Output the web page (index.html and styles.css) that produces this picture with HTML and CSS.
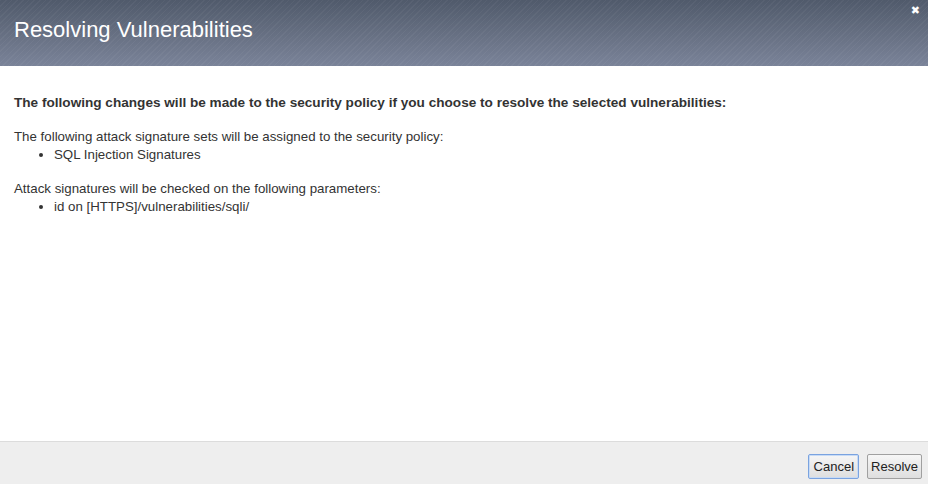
FILE: index.html
```html
<!DOCTYPE html>
<html>
<head>
<meta charset="utf-8">
<link rel="stylesheet" href="styles.css">
</head>
<body>
<div class="dialog">
  <div class="header">
    <h1 class="title">Resolving Vulnerabilities</h1>
    <span class="close">&#x2716;</span>
  </div>
  <div class="content">
    <p class="lead">The following changes will be made to the security policy if you choose to resolve the selected vulnerabilities:</p>
    <p class="para">The following attack signature sets will be assigned to the security policy:</p>
    <ul class="list"><li>SQL Injection Signatures</li></ul>
    <p class="para">Attack signatures will be checked on the following parameters:</p>
    <ul class="list"><li>id on [HTTPS]/vulnerabilities/sqli/</li></ul>
  </div>
  <div class="footer">
    <button class="btn btn-focus">Cancel</button>
    <button class="btn">Resolve</button>
  </div>
</div>
</body>
</html>
```
FILE: styles.css
```css
html, body { margin: 0; padding: 0; }
body { font-family: "Liberation Sans", Arial, sans-serif; background: #fff; }
.dialog { width: 928px; height: 484px; display: flex; flex-direction: column; }
.header {
  height: 66px; flex: none; position: relative;
  background:
    repeating-linear-gradient(135deg, rgba(255,255,255,0.04) 0 1px, rgba(0,0,0,0) 1px 4px),
    linear-gradient(180deg, #505a6b 0%, #6a7386 60%, #7a8399 100%);
  display: flex; align-items: center;
}
.title { margin: 0 0 6px 14px; font-weight: normal; font-size: 22px; color: #fff; }
.close { position: absolute; right: 8px; top: 4px; color: #fff; font-size: 11px; font-family: "DejaVu Sans", sans-serif; font-weight: bold; }
.content { flex: 1; padding: 28px 14px 0 14px; font-size: 13.3px; color: #333; }
.content p { margin: 0; line-height: 18px; }
.lead { font-weight: bold; font-size: 13.6px; margin-bottom: 16px !important; }
.list { margin: 0 0 16px 0; padding-left: 40px; line-height: 18px; }
.footer {
  height: 43px; flex: none; background: #eee; border-top: 1px solid #dcdcdc;
  display: flex; justify-content: flex-end; align-items: center; gap: 8px; padding: 0 6px 0 0;
  padding-top: 7px; box-sizing: border-box;
}
.btn {
  font-family: "Liberation Sans", Arial, sans-serif; font-size: 13px; color: #222;
  height: 25px; padding: 0 3px; border: 1px solid #a0a0a0; border-radius: 2px;
  background: linear-gradient(180deg, #f6f6f6, #dedede);
}
.btn-focus { padding: 0 4px 0 5px; border-color: #7aa3e0; box-shadow: inset 0 0 0 1px #c8dbf5; }
```
